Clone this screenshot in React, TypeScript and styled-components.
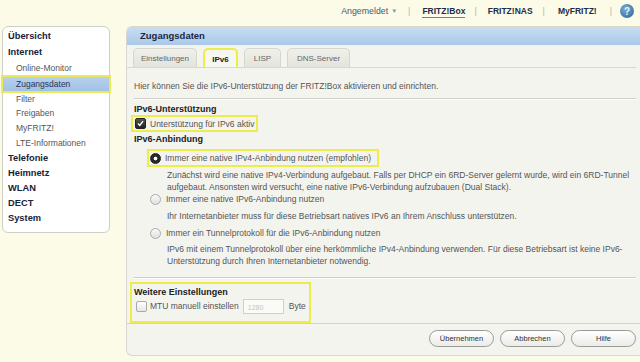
import styled, { createGlobalStyle } from "styled-components";

const GlobalStyle = createGlobalStyle`
  html, body {
    margin: 0;
    padding: 0;
    background: #fbfbe7;
  }
  body {
    font-family: "Liberation Sans", Arial, sans-serif;
    color: #333;
  }
`;

const Page = styled.div`
  width: 640px;
  height: 362px;
  overflow: hidden;
  display: flex;
  flex-direction: column;
`;

const TopBar = styled.div`
  height: 26px;
  box-sizing: border-box;
  padding: 0 6px 4px 0;
  display: flex;
  justify-content: flex-end;
  align-items: center;
`;

const NavItem = styled.span<{ $active?: boolean; $bold?: boolean }>`
  font-size: ${(p) => (p.$bold ? "8.5px" : "8.8px")};
  font-weight: ${(p) => (p.$bold ? "bold" : "normal")};
  color: ${(p) => (p.$bold ? "#1f2b48" : "#4a5670")};
  padding-bottom: 1px;
  border-bottom: 1px solid ${(p) => (p.$active ? "#5b86b8" : "transparent")};
  margin-top: 2px;
`;

const Caret = styled.span`
  color: #7a94b4;
  font-size: 6px;
  margin-left: 3px;
  vertical-align: 1px;
`;

const Sep = styled.span<{ $l: number; $r: number }>`
  color: #b5b5b0;
  font-size: 9px;
  margin: 0 ${(p) => p.$r}px 0 ${(p) => p.$l}px;
`;

const HelpIcon = styled.span`
  width: 14px;
  height: 14px;
  border-radius: 50%;
  background: radial-gradient(circle at 40% 35%, #7aaed6, #2b5f92);
  color: #e8f0f8;
  font-weight: bold;
  font-size: 10px;
  display: flex;
  align-items: center;
  justify-content: center;
`;

const Body = styled.div`
  display: flex;
  gap: 16px;
  padding-left: 2px;
  align-items: flex-start;
`;

const Sidebar = styled.nav`
  width: 106px;
  background: #fff;
  border: 1px solid #cfcfc6;
  border-radius: 6px;
  padding: 1px 0 6px;
`;

const MenuItem = styled.div<{ $sub?: boolean; $selected?: boolean; $h: number }>`
  height: ${(p) => p.$h}px;
  line-height: ${(p) => p.$h}px;
  font-size: ${(p) => (p.$sub ? "8.5px" : "9.3px")};
  font-weight: ${(p) => (p.$sub ? "normal" : "bold")};
  padding-left: ${(p) => (p.$sub ? "14px" : "6px")};
  margin: 0 -1px;
  background: ${(p) => (p.$selected ? "linear-gradient(#b9d2ee, #9fc0e6)" : "none")};
  outline: ${(p) => (p.$selected ? "2px solid #eaea55" : "none")};
  outline-offset: -1px;
  color: ${(p) => (p.$selected ? "#2a3550" : p.$sub ? "#555" : "#1a2238")};
`;

const Main = styled.main`
  flex: 1;
  height: 328px;
  background: #f4f4ef;
  border: 1px solid #d8d8ce;
  border-right: none;
  border-radius: 6px 0 0 6px;
  display: flex;
  flex-direction: column;
  overflow: hidden;
`;

const PanelHeader = styled.div`
  height: 18px;
  line-height: 18px;
  padding-left: 13px;
  background: linear-gradient(#c8ddf1, #a9c8e7);
  font-weight: bold;
  font-size: 9.5px;
  color: #1d2640;
`;

const TabBar = styled.div`
  display: flex;
  gap: 6px;
  padding: 3px 0 0 6px;
  border-bottom: 1px solid #d8d8d0;
  margin-right: 4px;
`;

const Tab = styled.div<{ $active?: boolean; $w: number }>`
  width: ${(p) => p.$w}px;
  height: 19px;
  line-height: 19px;
  text-align: center;
  font-size: 8px;
  color: ${(p) => (p.$active ? "#222" : "#666")};
  font-weight: ${(p) => (p.$active ? "bold" : "normal")};
  border-radius: 5px 5px 0 0;
  background: ${(p) => (p.$active ? "#f7f7f2" : "linear-gradient(#f0f0ea, #e4e4dd)")};
  border: ${(p) => (p.$active ? "2px solid #ecec4a" : "1px solid #d6d6ce")};
  border-bottom: none;
  box-sizing: border-box;
`;

const Content = styled.div`
  padding: 0 4px 0 7px;
  font-size: 8.5px;
  color: #444;
`;

const Intro = styled.p`
  margin: 12px 0 0;
  line-height: 12px;
  color: #555;
`;

const Divider = styled.div<{ $top: number }>`
  margin-top: ${(p) => p.$top}px;
  height: 1px;
  background: #cfcfc7;
  border-bottom: 1px solid #fff;
`;

const SectionTitle = styled.div<{ $top: number }>`
  margin-top: ${(p) => p.$top}px;
  line-height: 12px;
  font-weight: bold;
  font-size: 9px;
  color: #222;
`;

const Highlight = styled.div<{ $w: number; $h: number; $left: number; $top: number; $pad: number; $gap: number }>`
  width: ${(p) => p.$w}px;
  height: ${(p) => p.$h}px;
  margin-left: ${(p) => p.$left}px;
  margin-top: ${(p) => p.$top}px;
  border: 2px solid #ecec4a;
  box-sizing: border-box;
  display: flex;
  align-items: center;
  gap: ${(p) => p.$gap}px;
  padding-left: ${(p) => p.$pad}px;
`;

const Option = styled.div<{ $top: number; $left: number; $gap: number }>`
  margin-top: ${(p) => p.$top}px;
  margin-left: ${(p) => p.$left}px;
  height: 14px;
  display: flex;
  align-items: center;
  gap: ${(p) => p.$gap}px;
  color: #555;
`;

const Label = styled.span`
  color: #555;
  white-space: nowrap;
`;

const CheckBox = styled.span<{ $checked?: boolean }>`
  width: 11px;
  height: 11px;
  border-radius: 2px;
  box-sizing: border-box;
  flex-shrink: 0;
  display: flex;
  align-items: center;
  justify-content: center;
  background: ${(p) => (p.$checked ? "linear-gradient(#555, #222)" : "linear-gradient(#fff, #e6e6e6)")};
  border: 1px solid ${(p) => (p.$checked ? "#222" : "#aaa")};
`;

const Radio = styled.span<{ $checked?: boolean }>`
  width: 11px;
  height: 11px;
  border-radius: 50%;
  flex-shrink: 0;
  box-sizing: border-box;
  background: ${(p) => (p.$checked ? "radial-gradient(circle, #fff 0 1.6px, #2a2a2a 2.2px)" : "linear-gradient(#fafafa, #e0e0e0)")};
  border: 1px solid ${(p) => (p.$checked ? "#1e1e1e" : "#aaa")};
`;

const Desc = styled.p<{ $top: number }>`
  margin: ${(p) => p.$top}px 0 0 33px;
  line-height: 12px;
  color: #555;
`;

const MtuBox = styled.div`
  margin: 3px 0 0 3px;
  width: 181px;
  height: 42px;
  border: 2px solid #ecec4a;
  box-sizing: border-box;
  padding: 2px 0 0 2px;
  font-size: 8.5px;
`;

const MtuInput = styled.span`
  width: 41px;
  height: 15px;
  line-height: 15px;
  border: 1px solid #d0d0c8;
  background: #fafaf7;
  color: #c5c5c0;
  font-size: 7px;
  padding-left: 4px;
  box-sizing: border-box;
  margin: 0 2px 0 1px;
`;

const Footer = styled.div`
  margin-top: auto;
  border-top: 1px solid #d2d2ca;
  height: 31px;
  display: flex;
  justify-content: flex-end;
  align-items: center;
  gap: 6px;
  padding-right: 4px;
  padding-bottom: 1px;
`;

const Button = styled.button`
  width: 65px;
  height: 17px;
  border-radius: 9px;
  border: 1px solid #9a9a96;
  background: linear-gradient(#ffffff, #ebebe8);
  font-family: inherit;
  font-size: 7.5px;
  color: #333;
  padding: 0;
`;

const menu: { label: string; h: number; sub?: boolean; selected?: boolean }[] = [
  { label: "Übersicht", h: 16 },
  { label: "Internet", h: 16 },
  { label: "Online-Monitor", h: 16, sub: true },
  { label: "Zugangsdaten", h: 16, sub: true, selected: true },
  { label: "Filter", h: 14, sub: true },
  { label: "Freigaben", h: 15, sub: true },
  { label: "MyFRITZ!", h: 15, sub: true },
  { label: "LTE-Informationen", h: 15, sub: true },
  { label: "Telefonie", h: 15 },
  { label: "Heimnetz", h: 15 },
  { label: "WLAN", h: 15 },
  { label: "DECT", h: 15 },
  { label: "System", h: 15 },
];

const tabs = [
  { label: "Einstellungen", w: 64 },
  { label: "IPv6", w: 35, active: true },
  { label: "LISP", w: 37 },
  { label: "DNS-Server", w: 63 },
];

export default function App() {
  return (
    <>
      <GlobalStyle />
      <Page>
        <TopBar>
          <NavItem>
            Angemeldet<Caret>▼</Caret>
          </NavItem>
          <Sep $l={11} $r={12}>|</Sep>
          <NavItem $bold $active>
            FRITZ!Box
          </NavItem>
          <Sep $l={9} $r={11}>|</Sep>
          <NavItem $bold>FRITZ!NAS</NavItem>
          <Sep $l={10} $r={13}>|</Sep>
          <NavItem $bold>MyFRITZ!</NavItem>
          <Sep $l={13} $r={8}>|</Sep>
          <HelpIcon>?</HelpIcon>
        </TopBar>
        <Body>
          <Sidebar>
            {menu.map((m) => (
              <MenuItem key={m.label} $h={m.h} $sub={m.sub} $selected={m.selected}>
                {m.label}
              </MenuItem>
            ))}
          </Sidebar>
          <Main>
            <PanelHeader>Zugangsdaten</PanelHeader>
            <TabBar>
              {tabs.map((t) => (
                <Tab key={t.label} $w={t.w} $active={t.active}>
                  {t.label}
                </Tab>
              ))}
            </TabBar>
            <Content>
              <Intro>
                Hier können Sie die IPv6-Unterstützung der FRITZ!Box aktivieren und einrichten.
              </Intro>
              <Divider $top={6} />
              <SectionTitle $top={3}>IPv6-Unterstützung</SectionTitle>
              <Highlight $w={127} $h={17} $left={-3} $top={0} $pad={2} $gap={4}>
                <CheckBox $checked>
                  <svg width="7" height="7" viewBox="0 0 7 7">
                    <path d="M1 3.6 L2.8 5.4 L6 1.2" stroke="#fff" strokeWidth="1.4" fill="none" />
                  </svg>
                </CheckBox>
                <Label>Unterstützung für IPv6 aktiv</Label>
              </Highlight>
              <SectionTitle $top={1}>IPv6-Anbindung</SectionTitle>
              <Highlight $w={232} $h={18} $left={13} $top={4} $pad={1} $gap={4}>
                <Radio $checked />
                <Label>Immer eine native IPv4-Anbindung nutzen (empfohlen)</Label>
              </Highlight>
              <Desc $top={2}>
                Zunächst wird eine native IPv4-Verbindung aufgebaut. Falls per DHCP ein 6RD-Server gelernt wurde, wird ein 6RD-Tunnel
                <br />
                aufgebaut. Ansonsten wird versucht, eine native IPv6-Verbindung aufzubauen (Dual Stack).
              </Desc>
              <Option $top={-1} $left={16} $gap={5}>
                <Radio />
                <Label>Immer eine native IPv6-Anbindung nutzen</Label>
              </Option>
              <Desc $top={4}>
                Ihr Internetanbieter muss für diese Betriebsart natives IPv6 an Ihrem Anschluss unterstützen.
              </Desc>
              <Option $top={4} $left={16} $gap={5}>
                <Radio />
                <Label>Immer ein Tunnelprotokoll für die IPv6-Anbindung nutzen</Label>
              </Option>
              <Desc $top={3}>
                IPv6 mit einem Tunnelprotokoll über eine herkömmliche IPv4-Anbindung verwenden. Für diese Betriebsart ist keine IPv6-
                <br />
                Unterstützung durch Ihren Internetanbieter notwendig.
              </Desc>
              <Divider $top={10} />
            </Content>
            <MtuBox>
              <SectionTitle $top={0}>Weitere Einstellungen</SectionTitle>
              <Option $top={1} $left={2} $gap={3}>
                <CheckBox />
                <Label>MTU manuell einstellen</Label>
                <MtuInput>1280</MtuInput>
                <Label>Byte</Label>
              </Option>
            </MtuBox>
            <Footer>
              <Button>Übernehmen</Button>
              <Button>Abbrechen</Button>
              <Button>Hilfe</Button>
            </Footer>
          </Main>
        </Body>
      </Page>
    </>
  );
}
